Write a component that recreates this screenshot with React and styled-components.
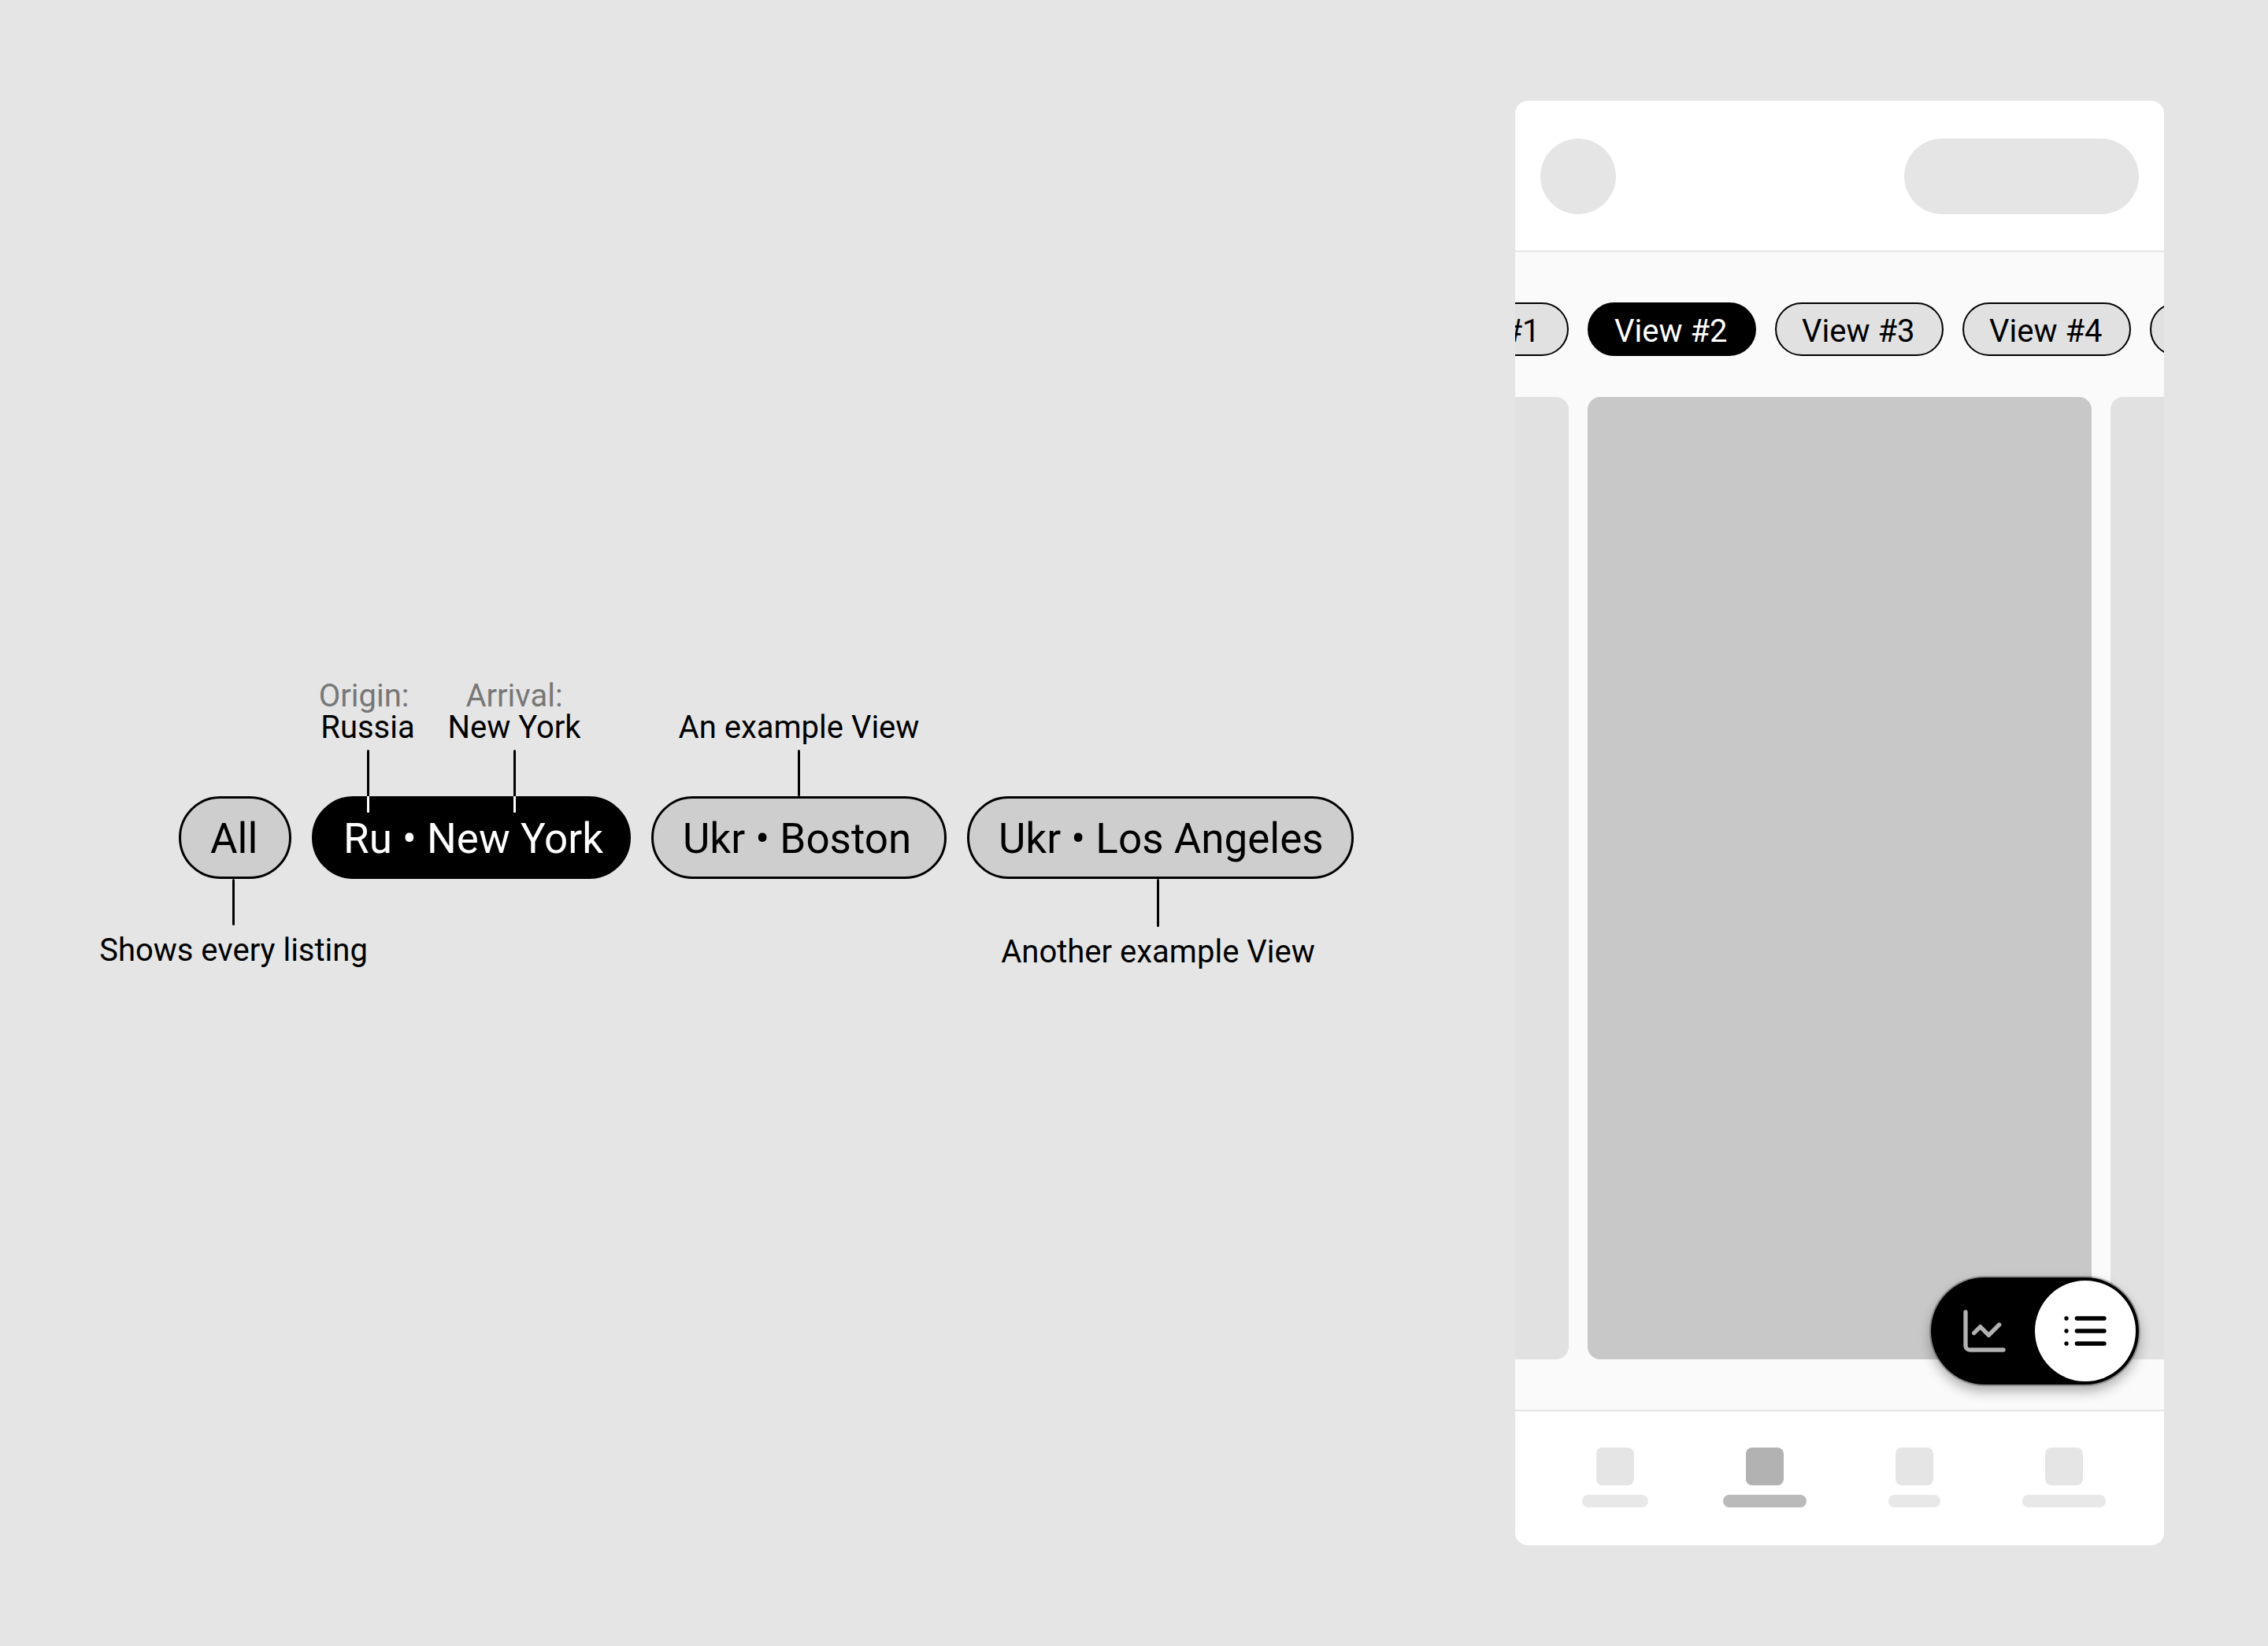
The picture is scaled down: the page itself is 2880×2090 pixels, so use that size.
import React, { useState } from "react";
import styled, { createGlobalStyle } from "styled-components";

const GlobalStyle = createGlobalStyle`
  *, *::before, *::after { box-sizing: border-box; }
  body {
    margin: 0;
    background: #e5e5e5;
    color: #000;
    font-family: Roboto, "Liberation Sans", sans-serif;
  }
  button {
    margin: 0;
    padding: 0;
    border: 0;
    background: none;
    color: inherit;
    font: inherit;
    cursor: pointer;
  }
`;

const Page = styled.main`
  display: flex;
  align-items: stretch;
  min-height: 100vh;
  padding: 128px 132px 128px 227px;
`;

/* ---------- Annotated chips ---------- */

const Diagram = styled.section`
  flex: 1;
  display: flex;
  align-items: center;
  padding-top: 2px;
`;

const ChipRow = styled.div`
  display: grid;
  grid-template-columns: 143px 405px 375px 491px;
  grid-template-rows: auto 105px auto;
  column-gap: 26px;
`;

const NoteGroup = styled.div`
  grid-column: ${(p) => p.$column};
  grid-row: ${(p) => (p.$below ? 3 : 1)};
  display: flex;
  align-items: ${(p) => (p.$below ? "flex-start" : "flex-end")};
`;

const Note = styled.div`
  display: flex;
  flex-direction: ${(p) => (p.$below ? "column-reverse" : "column")};
  align-items: center;
  gap: ${(p) => (p.$below ? 12 : 8)}px;
  width: ${(p) => p.$width}px;
`;

const NoteText = styled.p`
  margin: 0;
  font-size: 40px;
  line-height: 40px;
  text-align: center;
  white-space: pre;
`;

const Muted = styled.span`
  display: block;
  color: #777;
`;

const Stem = styled.i`
  display: block;
  width: 3px;
  height: ${(p) => p.$length}px;
  border-radius: 2px;
  background: #000;
`;

/* A stem whose white tip reaches into the black chip. */
const PiercingStem = styled(Stem)`
  z-index: 1;
  height: 80px;
  margin-bottom: -21px;
  background: linear-gradient(#000 59px, #fff 59px);
`;

const Chip = styled.button`
  grid-row: 2;
  padding: 4px 0 0 37px;
  border: 3px solid #000;
  border-radius: 53px;
  background: ${(p) => (p.$selected ? "#000" : "#cecece")};
  color: ${(p) => (p.$selected ? "#fff" : "#000")};
  font-size: 53px;
  line-height: 52px;
  text-align: left;
  white-space: nowrap;
`;

/* ---------- Phone ---------- */

const Phone = styled.section`
  flex: 0 0 824px;
  display: flex;
  flex-direction: column;
  overflow: hidden;
  border-radius: 16px;
  background: #fff;
`;

const PhoneHeader = styled.header`
  display: flex;
  justify-content: space-between;
  padding: 48px 32px 46px;
  border-bottom: 2px solid #e5e5e5;
`;

const HeaderBlock = styled.div`
  width: ${(p) => p.$width}px;
  height: 96px;
  border-radius: 48px;
  background: #e5e5e5;
`;

const Content = styled.div`
  position: relative;
  flex: 1;
  display: flex;
  flex-direction: column;
  gap: 52px;
  padding: 64px 0;
  overflow: hidden;
  background: #fafafa;
`;

const Tabs = styled.div`
  display: flex;
  gap: 24px;
  margin-left: -146px;
`;

const Tab = styled.button`
  flex: 0 0 214px;
  height: 68px;
  padding: 6px 0 0 32px;
  border: 2px solid #000;
  border-radius: 34px;
  background: ${(p) => (p.$selected ? "#000" : "#e1e1e1")};
  color: ${(p) => (p.$selected ? "#fff" : "#000")};
  font-size: 40px;
  line-height: 40px;
  text-align: left;
  white-space: nowrap;
`;

const Cards = styled.div`
  flex: 1;
  display: flex;
  justify-content: center;
  gap: 24px;
`;

const Card = styled.article`
  flex: 0 0 640px;
  border-radius: 16px;
  background: ${(p) => (p.$current ? "#c8c8c8" : "#e1e1e1")};
`;

const ModeSwitch = styled.div`
  position: absolute;
  right: 32px;
  bottom: 32px;
  display: flex;
  padding: 4px;
  border-radius: 68px;
  background: #000;
  box-shadow: 0 0 0 2px rgba(0, 0, 0, 0.24), 0 8px 16px rgba(0, 0, 0, 0.32);
`;

const ModeButton = styled.button`
  display: flex;
  align-items: center;
  justify-content: center;
  width: 128px;
  height: 128px;
  border-radius: 50%;
  background: ${(p) => (p.$on ? "#fff" : "transparent")};
  color: ${(p) => (p.$on ? "#000" : "#b2b2b2")};
`;

const Glyph = styled.svg`
  width: 64px;
  height: 64px;
  fill: none;
  stroke: currentColor;
  stroke-width: 2;
  stroke-linecap: round;
  stroke-linejoin: round;
`;

const NavBar = styled.nav`
  display: flex;
  padding: 46px 32px 48px;
  border-top: 2px solid #e5e5e5;
`;

const NavItem = styled.button`
  flex: 1;
  display: flex;
  flex-direction: column;
  align-items: center;
  gap: 12px;
`;

const NavIcon = styled.span`
  width: 48px;
  height: 48px;
  border-radius: 8px;
  background: ${(p) => (p.$active ? "#b2b2b2" : "#e5e5e5")};
`;

const NavLabel = styled.span`
  width: ${(p) => p.$width}px;
  height: 16px;
  border-radius: 8px;
  background: ${(p) => (p.$active ? "#bababa" : "#e8e8e8")};
`;

const chips = ["All", "Ru • New York", "Ukr • Boston", "Ukr • Los Angeles"];
const views = ["View #1", "View #2", "View #3", "View #4", "View #5"];
const navItems = [
  { name: "Home", width: 84 },
  { name: "Listings", width: 106 },
  { name: "Chat", width: 66 },
  { name: "Account", width: 106 },
];

export default function App() {
  const [chip, setChip] = useState(1);
  const [view, setView] = useState(1);
  const [mode, setMode] = useState("list");
  const [nav, setNav] = useState(1);

  return (
    <>
      <GlobalStyle />
      <Page>
        <Diagram>
          <ChipRow>
            <NoteGroup $column={2}>
              <Note $width={142}>
                <NoteText>
                  <Muted>{"Origin:\u00a0"}</Muted>
                  Russia
                </NoteText>
                <PiercingStem />
              </Note>
              <Note $width={230}>
                <NoteText>
                  <Muted>Arrival:</Muted>
                  New York
                </NoteText>
                <PiercingStem />
              </Note>
            </NoteGroup>
            <NoteGroup $column={3}>
              <Note $width={378}>
                <NoteText>An example View</NoteText>
                <Stem $length={59} />
              </Note>
            </NoteGroup>

            {chips.map((label, i) => (
              <Chip
                key={label}
                type="button"
                $selected={i === chip}
                aria-pressed={i === chip}
                onClick={() => setChip(i)}
              >
                {label}
              </Chip>
            ))}

            <NoteGroup $column={1} $below>
              <Note $width={139} $below>
                <NoteText>Shows every listing</NoteText>
                <Stem $length={59} />
              </Note>
            </NoteGroup>
            <NoteGroup $column={4} $below>
              <Note $width={485} $below>
                <NoteText>Another example View</NoteText>
                <Stem $length={61} />
              </Note>
            </NoteGroup>
          </ChipRow>
        </Diagram>

        <Phone>
          <PhoneHeader>
            <HeaderBlock $width={96} />
            <HeaderBlock $width={298} />
          </PhoneHeader>

          <Content>
            <Tabs>
              {views.map((label, i) => (
                <Tab
                  key={label}
                  type="button"
                  $selected={i === view}
                  aria-pressed={i === view}
                  onClick={() => setView(i)}
                >
                  {label}
                </Tab>
              ))}
            </Tabs>
            <Cards>
              <Card />
              <Card $current />
              <Card />
            </Cards>
            <ModeSwitch>
              <ModeButton
                type="button"
                aria-label="Chart"
                $on={mode === "chart"}
                onClick={() => setMode("chart")}
              >
                <Glyph viewBox="0 0 24 24" aria-hidden="true">
                  <path d="M3 3v16a2 2 0 0 0 2 2h16" />
                  <path d="m7 13 3-3 4 4 5-5" />
                </Glyph>
              </ModeButton>
              <ModeButton
                type="button"
                aria-label="List"
                $on={mode === "list"}
                onClick={() => setMode("list")}
              >
                <Glyph viewBox="0 0 24 24" aria-hidden="true">
                  <path d="M3 6h.01M3 12h.01M3 18h.01M8 6h13M8 12h13M8 18h13" />
                </Glyph>
              </ModeButton>
            </ModeSwitch>
          </Content>

          <NavBar>
            {navItems.map((item, i) => (
              <NavItem
                key={item.name}
                type="button"
                aria-label={item.name}
                onClick={() => setNav(i)}
              >
                <NavIcon $active={i === nav} />
                <NavLabel $width={item.width} $active={i === nav} />
              </NavItem>
            ))}
          </NavBar>
        </Phone>
      </Page>
    </>
  );
}
